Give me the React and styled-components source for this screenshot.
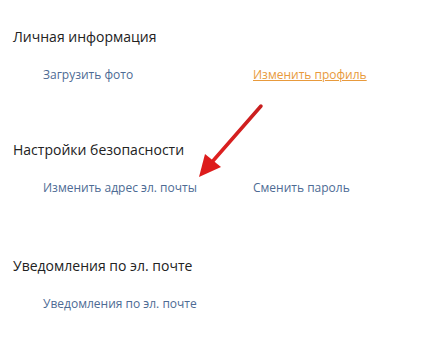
import React from 'react';
import styled, { createGlobalStyle } from 'styled-components';

const Global = createGlobalStyle`
  body {
    margin: 0;
    background: #ffffff;
    font-family: "Open Sans", "Noto Sans", sans-serif;
  }
`;

const Page = styled.div`
  position: relative;
  width: 448px;
  height: 363px;
  padding: 27px 0 0 13px;
  box-sizing: border-box;
  display: flex;
  flex-direction: column;
`;

const Section = styled.section`
  display: flex;
  flex-direction: column;
  gap: 20px;
  margin-top: ${p => p.$top || 0}px;
`;

const Heading = styled.h2`
  margin: 0;
  font-size: 14px;
  line-height: 20px;
  font-weight: 400;
  color: #222;
`;

const Row = styled.div`
  display: grid;
  grid-template-columns: 210px 180px;
  padding-left: 30px;
`;

const Link = styled.a`
  font-size: 12px;
  line-height: 16px;
  color: ${p => (p.$active ? '#e89a3c' : '#4d6b94')};
  text-decoration: ${p => (p.$active ? 'underline' : 'none')};
  cursor: pointer;
`;

const Arrow = styled.svg`
  position: absolute;
  left: 190px;
  top: 95px;
  width: 80px;
  height: 90px;
  pointer-events: none;
`;

export default function App() {
  return (
    <>
      <Global />
      <Page>
        <Section>
          <Heading>Личная информация</Heading>
          <Row>
            <Link>Загрузить фото</Link>
            <Link $active>Изменить профиль</Link>
          </Row>
        </Section>
        <Section $top={57}>
          <Heading>Настройки безопасности</Heading>
          <Row>
            <Link>Изменить адрес эл. почты</Link>
            <Link>Сменить пароль</Link>
          </Row>
        </Section>
        <Section $top={60}>
          <Heading>Уведомления по эл. почте</Heading>
          <Row>
            <Link>Уведомления по эл. почте</Link>
          </Row>
        </Section>
        <Arrow viewBox="0 0 80 90">
          <defs>
            <linearGradient id="ar" x1="1" y1="0" x2="0" y2="1">
              <stop offset="0" stopColor="#c81e1e" />
              <stop offset="1" stopColor="#e02020" />
            </linearGradient>
          </defs>
          <line x1="71" y1="11" x2="22" y2="67" stroke="url(#ar)" strokeWidth="3.5" strokeLinecap="round" />
          <polygon points="9,82 15,59 31,72" fill="#dd1c1c" />
        </Arrow>
      </Page>
    </>
  );
}
